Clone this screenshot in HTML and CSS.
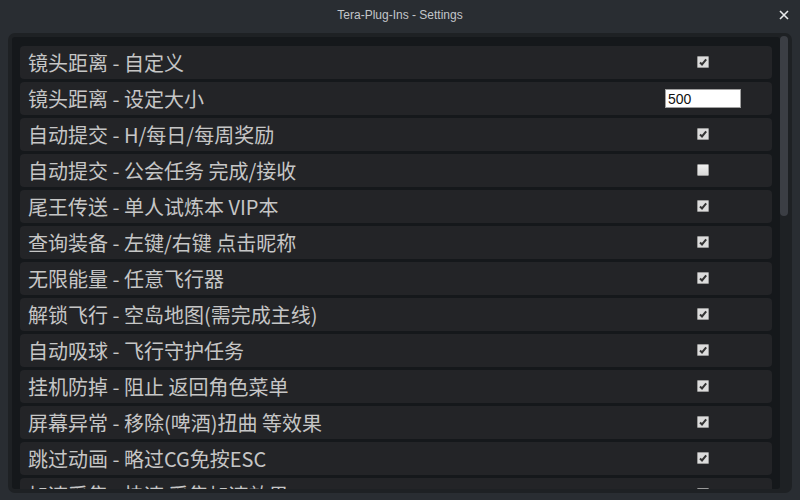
FILE: index.html
```html
<!DOCTYPE html>
<html lang="zh">
<head>
<meta charset="utf-8">
<title>Tera-Plug-Ins - Settings</title>
<link rel="stylesheet" href="styles.css">
</head>
<body>
<div class="window">
  <header class="titlebar">
    <span class="title">Tera-Plug-Ins - Settings</span>
    <button class="close" aria-label="close">
      <svg width="10" height="10" viewBox="0 0 10 10"><path d="M1 1 L9 9 M9 1 L1 9" stroke="#e8eaec" stroke-width="1.6" fill="none"/></svg>
    </button>
  </header>
  <div class="panel">
    <div class="list">
      <div class="row"><span class="label">镜头距离 - 自定义</span><span class="ctl"><span class="cb on"></span></span></div>
      <div class="row"><span class="label">镜头距离 - 设定大小</span><span class="ctl"><input class="num" type="text" value="500"></span></div>
      <div class="row"><span class="label">自动提交 - H/每日/每周奖励</span><span class="ctl"><span class="cb on"></span></span></div>
      <div class="row"><span class="label">自动提交 - 公会任务 完成/接收</span><span class="ctl"><span class="cb"></span></span></div>
      <div class="row"><span class="label">尾王传送 - 单人试炼本 VIP本</span><span class="ctl"><span class="cb on"></span></span></div>
      <div class="row"><span class="label">查询装备 - 左键/右键 点击昵称</span><span class="ctl"><span class="cb on"></span></span></div>
      <div class="row"><span class="label">无限能量 - 任意飞行器</span><span class="ctl"><span class="cb on"></span></span></div>
      <div class="row"><span class="label">解锁飞行 - 空岛地图(需完成主线)</span><span class="ctl"><span class="cb on"></span></span></div>
      <div class="row"><span class="label">自动吸球 - 飞行守护任务</span><span class="ctl"><span class="cb on"></span></span></div>
      <div class="row"><span class="label">挂机防掉 - 阻止 返回角色菜单</span><span class="ctl"><span class="cb on"></span></span></div>
      <div class="row"><span class="label">屏幕异常 - 移除(啤酒)扭曲 等效果</span><span class="ctl"><span class="cb on"></span></span></div>
      <div class="row"><span class="label">跳过动画 - 略过CG免按ESC</span><span class="ctl"><span class="cb on"></span></span></div>
      <div class="row"><span class="label">加速采集 - 快速 采集加速效果</span><span class="ctl"><span class="cb on"></span></span></div>
    </div>
    <div class="track"><div class="thumb"></div></div>
  </div>
</div>
</body>
</html>
```
FILE: styles.css
```css
* { box-sizing: border-box; }
html, body {
  margin: 0;
  padding: 0;
  width: 800px;
  height: 500px;
  overflow: hidden;
  background: #292d32;
  font-family: "Noto Sans CJK SC", "Liberation Sans", sans-serif;
}
.window {
  display: flex;
  flex-direction: column;
  height: 500px;
  padding: 0 8px 7px 8px;
}
.titlebar {
  position: relative;
  height: 33px;
  display: flex;
  align-items: center;
  justify-content: center;
  padding-bottom: 3px;
}
.title {
  font-family: "Liberation Sans", Arial, sans-serif;
  font-size: 12px;
  color: #c3c6ca;
}
.close {
  position: absolute;
  right: 3px;
  top: 10px;
  width: 10px;
  height: 10px;
  padding: 0;
  border: 0;
  background: none;
  display: flex;
}
.panel {
  flex: 1;
  display: flex;
  background: #1e2124;
  border-radius: 7px;
  padding: 4px;
  min-height: 0;
}
.list {
  flex: 1;
  background: #15181b;
  border-radius: 3px;
  padding: 9px 8px 0 8px;
  overflow: hidden;
  display: flex;
  flex-direction: column;
  gap: 3px;
}
.row {
  flex: none;
  height: 33px;
  background: #232427;
  border-radius: 4px;
  display: flex;
  align-items: center;
  padding-left: 8px;
}
.label {
  flex: 1;
  font-size: 20px;
  color: #c6c6c6;
  white-space: nowrap;
  line-height: 1;
  padding-top: 1px;
}
.ctl {
  width: 138px;
  display: flex;
  justify-content: center;
  align-items: center;
}
.cb {
  width: 12px;
  height: 12px;
  border: 1px solid #9a9a9a;
  background: linear-gradient(#f0f0f0, #d8d8d8);
  border-radius: 1px;
  margin-top: -1px;
}
.cb.on {
  background: #dcdcdc url("data:image/svg+xml,%3Csvg xmlns='http://www.w3.org/2000/svg' width='10' height='10' viewBox='0 0 10 10'%3E%3Cpath d='M2 5.5 L4 7.5 L8.2 2.3' stroke='%23333' stroke-width='2' fill='none'/%3E%3C/svg%3E") center/10px 10px no-repeat;
}
.num {
  width: 76px;
  height: 19px;
  border: 1px solid #a0a0a0;
  background: #fff;
  font-family: "Liberation Sans", Arial, sans-serif;
  font-size: 14px;
  color: #111;
  padding: 0 2px;
  margin: 0;
  outline: none;
}
.track {
  width: 8px;
  display: flex;
  flex-direction: column;
}
.thumb {
  height: 180px;
  margin-top: -1px;
  background: #3b3e44;
  border-radius: 4px;
}
```
